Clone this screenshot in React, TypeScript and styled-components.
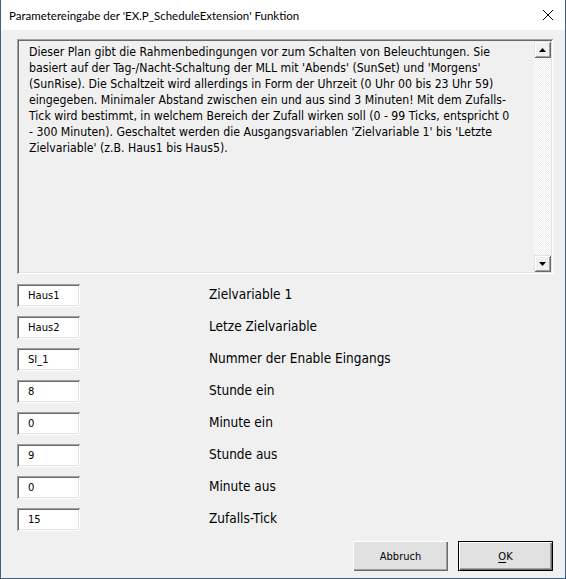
import React from "react";
import styled, { createGlobalStyle } from "styled-components";

const Global = createGlobalStyle`
  html, body { margin: 0; padding: 0; background: #f0f0f0; }
  * { box-sizing: border-box; }
`;

const Window = styled.div`
  width: 566px;
  height: 579px;
  display: flex;
  flex-direction: column;
  border: 1px solid #3e5f80;
  border-top: none;
  background: #f0f0f0;
`;

const TitleBar = styled.div`
  height: 30px;
  flex: none;
  background: #ffffff;
  display: flex;
  align-items: center;
  justify-content: space-between;
  padding: 0 10px 0 8px;
  font-family: Lato, "Liberation Sans", sans-serif;
  font-size: 11.5px;
  color: #000;
`;

const CloseIcon = styled.svg`
  width: 12px;
  height: 12px;
  margin-right: 1px;
`;

const Body = styled.div`
  flex: 1;
  display: flex;
  flex-direction: column;
  padding: 9px 12px 0 16px;
`;

const Sunken = styled.div`
  box-shadow: inset 1px 1px #a0a0a0, inset -1px -1px #ffffff,
    inset 2px 2px #696969, inset -2px -2px #e3e3e3;
`;

const InfoBox = styled(Sunken)`
  width: 536px;
  height: 235px;
  padding: 2px;
  display: flex;
`;

const InfoText = styled.div`
  flex: 1;
  padding: 3px 0 0 10px;
  font-family: "DejaVu Sans Condensed", "DejaVu Sans", sans-serif;
  font-stretch: condensed;
  font-size: 12.2px;
  line-height: 16px;
  color: #000;
  white-space: pre;
  overflow: hidden;
`;

const ScrollBar = styled.div`
  width: 17px;
  flex: none;
  display: flex;
  flex-direction: column;
  justify-content: space-between;
  background-color: #ffffff;
  background-image: conic-gradient(#ffffff 25%, #ececec 0 50%, #ffffff 0 75%, #ececec 0);
  background-size: 2px 2px;
`;

const ArrowButton = styled.div`
  width: 17px;
  height: 17px;
  background: #f0f0f0;
  display: flex;
  align-items: center;
  justify-content: center;
  box-shadow: inset 1px 1px #e3e3e3, inset -1px -1px #696969,
    inset 2px 2px #ffffff, inset -2px -2px #a0a0a0;
`;

const Fields = styled.div`
  display: flex;
  flex-direction: column;
  gap: 9px;
  margin-top: 10px;
`;

const Row = styled.div`
  display: grid;
  grid-template-columns: 63px 1fr;
  column-gap: 129px;
  align-items: center;
`;

const Input = styled(Sunken)`
  height: 23px;
  background: #ffffff;
  padding: 0 0 0 11px;
  display: flex;
  align-items: center;
  font-family: "DejaVu Sans", sans-serif;
  font-size: 10px;
  color: #000;
`;

const Label = styled.div`
  font-family: "DejaVu Sans Condensed", "DejaVu Sans", sans-serif;
  font-stretch: condensed;
  font-size: 13.5px;
  color: #000;
  padding-bottom: 3px;
`;

const ButtonBar = styled.div`
  display: flex;
  justify-content: flex-end;
  gap: 10px;
  margin-top: 10px;
`;

const Button = styled.div<{ $default?: boolean }>`
  width: 95px;
  height: 30px;
  background: #e1e1e1;
  display: flex;
  align-items: center;
  justify-content: center;
  font-family: "DejaVu Sans Condensed", "DejaVu Sans", sans-serif;
  font-stretch: condensed;
  font-size: 11px;
  color: #000;
  box-shadow: ${(p) =>
    p.$default
      ? "inset 1px 1px #000, inset -1px -1px #000, inset 2px 2px #fff, inset -2px -2px #696969, inset -3px -3px #a0a0a0"
      : "inset 1px 1px #fff, inset -1px -1px #696969, inset -2px -2px #a0a0a0"};
`;

const U = styled.span`
  text-decoration: underline;
  text-underline-offset: 2px;
`;

const info =
  "Dieser Plan gibt die Rahmenbedingungen vor zum Schalten von Beleuchtungen. Sie\n" +
  "basiert auf der Tag-/Nacht-Schaltung der MLL mit 'Abends' (SunSet) und 'Morgens'\n" +
  "(SunRise). Die Schaltzeit wird allerdings in Form der Uhrzeit (0 Uhr 00 bis 23 Uhr 59)\n" +
  "eingegeben. Minimaler Abstand zwischen ein und aus sind 3 Minuten! Mit dem Zufalls-\n" +
  "Tick wird bestimmt, in welchem Bereich der Zufall wirken soll (0 - 99 Ticks, entspricht 0\n" +
  "- 300 Minuten). Geschaltet werden die Ausgangsvariablen 'Zielvariable 1' bis 'Letzte\n" +
  "Zielvariable' (z.B. Haus1 bis Haus5).";

const rows: [string, string][] = [
  ["Haus1", "Zielvariable 1"],
  ["Haus2", "Letze Zielvariable"],
  ["SI_1", "Nummer der Enable Eingangs"],
  ["8", "Stunde ein"],
  ["0", "Minute ein"],
  ["9", "Stunde aus"],
  ["0", "Minute aus"],
  ["15", "Zufalls-Tick"],
];

export default function App() {
  return (
    <>
      <Global />
      <Window>
        <TitleBar>
          <span>Parametereingabe der 'EX.P_ScheduleExtension' Funktion</span>
          <CloseIcon viewBox="0 0 12 12">
            <path d="M1 1 L11 11 M11 1 L1 11" stroke="#000" strokeWidth="1" fill="none" />
          </CloseIcon>
        </TitleBar>
        <Body>
          <InfoBox>
            <InfoText>{info}</InfoText>
            <ScrollBar>
              <ArrowButton>
                <svg width="7" height="4" viewBox="0 0 7 4">
                  <path d="M3.5 0 L7 4 L0 4 Z" fill="#000" />
                </svg>
              </ArrowButton>
              <ArrowButton>
                <svg width="7" height="4" viewBox="0 0 7 4">
                  <path d="M0 0 L7 0 L3.5 4 Z" fill="#000" />
                </svg>
              </ArrowButton>
            </ScrollBar>
          </InfoBox>
          <Fields>
            {rows.map(([v, l], i) => (
              <Row key={i}>
                <Input>{v}</Input>
                <Label>{l}</Label>
              </Row>
            ))}
          </Fields>
          <ButtonBar>
            <Button>Abbruch</Button>
            <Button $default>
              <span>
                <U>O</U>K
              </span>
            </Button>
          </ButtonBar>
        </Body>
      </Window>
    </>
  );
}
